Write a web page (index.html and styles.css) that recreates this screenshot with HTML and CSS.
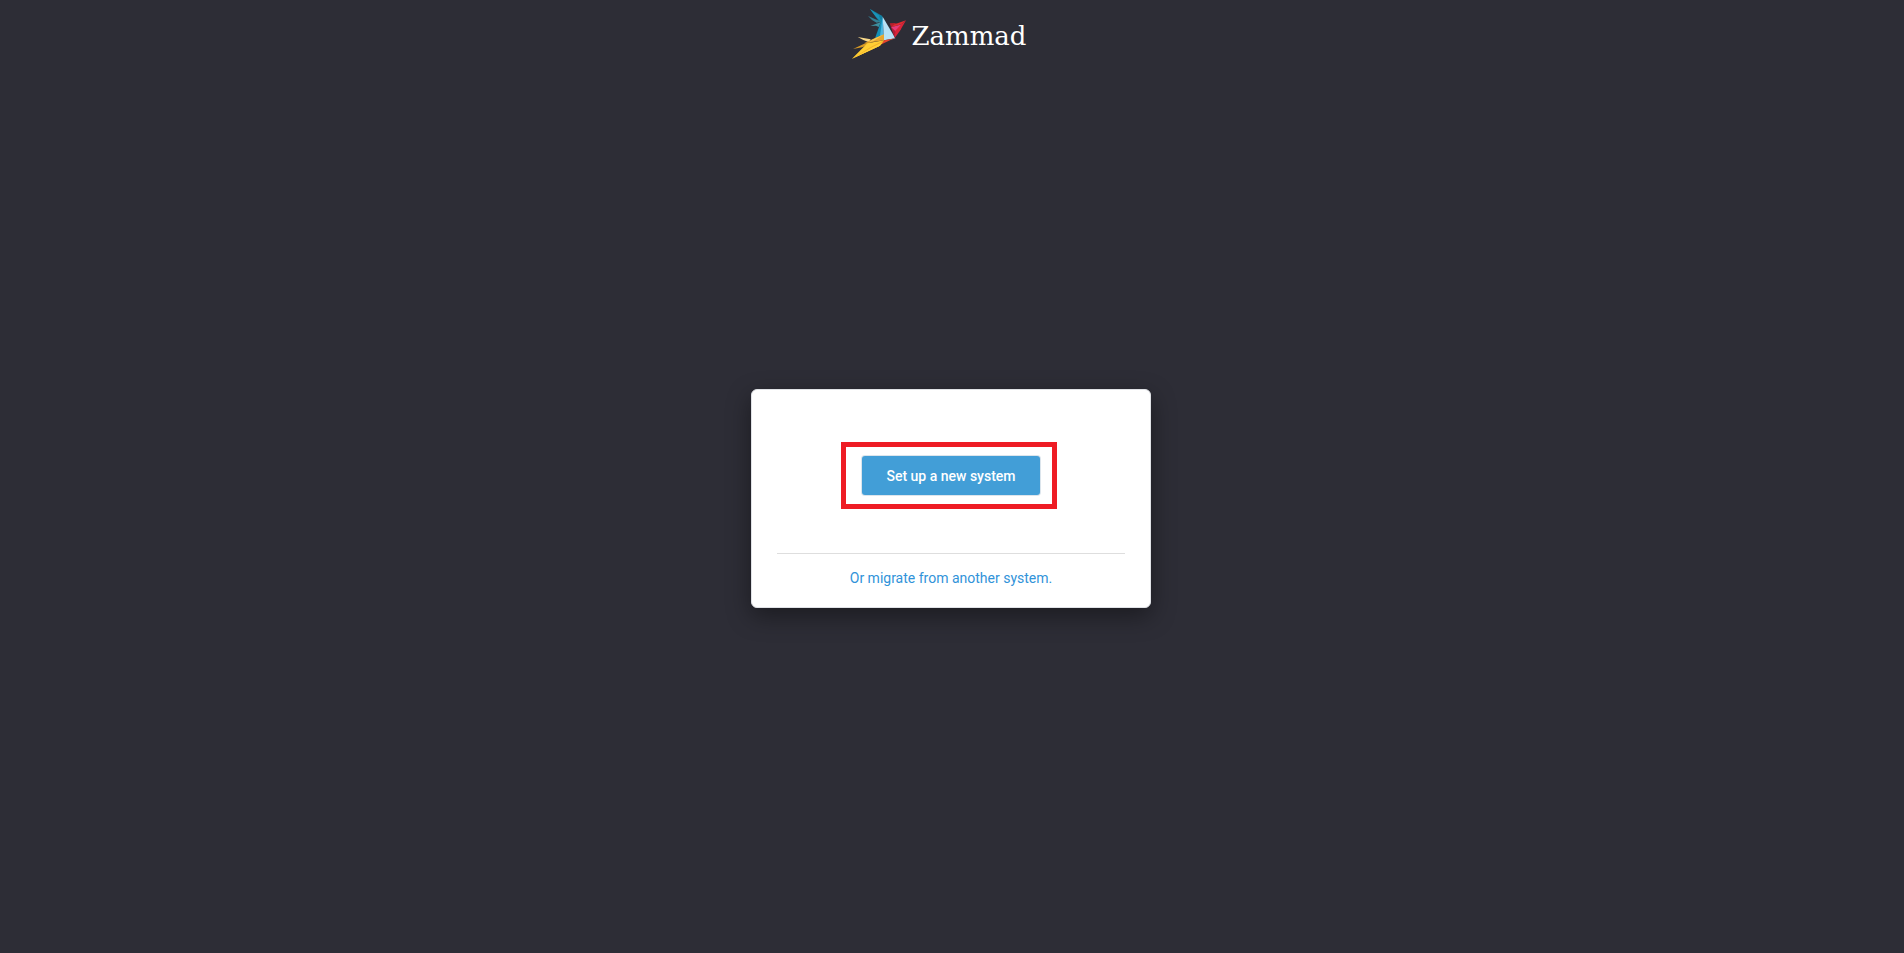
FILE: index.html
```html
<!DOCTYPE html>
<html lang="en">
<head>
  <meta charset="UTF-8">
  <meta name="viewport" content="width=device-width, initial-scale=1.0">
  <title>Zammad</title>
  <link rel="stylesheet" href="styles.css">
</head>
<body>
  <header class="header">
    <svg class="logo-bird" viewBox="36 24 162 156" aria-hidden="true">
      <!-- upper wing -->
      <path fill="#1280a3" d="M90 27 127 48 129 66 120 68Z"/>
      <path fill="#1b93b8" d="M90 27 116 46 123 64 108 50Z"/>
      <path fill="#337f93" d="M84 48 124 65 110 68 96 60Z"/>
      <path fill="#3d8fa0" d="M91 78 123 66 116 81 108 77Z"/>
      <!-- body -->
      <path fill="#148eb5" d="M128 50 104 118 124 106Z"/>
      <path fill="#4bb5df" d="M128 50 120 108 132 121Z"/>
      <path fill="#b8e3f6" d="M128 50 166 115 132 121Z"/>
      <!-- head -->
      <path fill="#b81f2d" d="M149 70 164 69 174 73 153 81Z"/>
      <path fill="#e42b30" d="M164 73 198 61 184 73 153 82Z"/>
      <path fill="#e93b79" d="M153 82 186 73 180 91 164 95Z"/>
      <path fill="#b51d35" d="M153 82 167 94 164 114Z"/>
      <path fill="#db2438" d="M198 61 180 92 164 114 166 92 184 73Z"/>
      <!-- tail -->
      <path fill="#e8452c" d="M132 121 166 115 150 121 120 135Z"/>
      <path fill="#f7d889" d="M53 111 92 118 87 127 70 120Z"/>
      <path fill="#e9a62f" d="M132 103 132 121 72 130 104 115Z"/>
      <path fill="#f7c84e" d="M132 103 104 121 84 129 96 119Z"/>
      <path fill="#d99a25" d="M39 147 84 126 100 130 66 142Z"/>
      <path fill="#ffce33" d="M36 176 82 130 132 121 120 137Z"/>
      <path fill="#f3b229" d="M36 176 92 141 132 121 120 137Z"/>
      <path fill="#ffd23c" d="M36 176 100 140 128 127 118 138Z"/>
    </svg>
    <span class="logo-text">Zammad</span>
  </header>

  <main class="main">
    <div class="card">
      <div class="setup">
        <button class="button" type="button">Set up a new system</button>
      </div>
      <div class="migrate">
        <a class="link" href="#migrate">Or migrate from another system.</a>
      </div>
    </div>
  </main>
</body>
</html>
```
FILE: styles.css
```css
*,
*::after {
  box-sizing: border-box;
}
body {
  display: flex;
  flex-direction: column;
  min-height: 100vh;
  margin: 0;
  background-color: #2d2d36;
  font-family: Roboto, sans-serif;
  font-size: 14px;
  line-height: 20px;
}
.header {
  display: flex;
  justify-content: center;
  align-items: center;
  gap: 5px;
  padding: 8px 25px 8px 0;
}
.logo-bird {
  width: 54px;
  height: 52px;
}
.logo-text {
  padding-top: 4px;
  color: #fff;
  font-family: 'DejaVu Serif', serif;
  font-size: 26px;
  line-height: 32px;
}
.main {
  display: flex;
  flex: 1;
  justify-content: center;
  align-items: center;
  padding: 0 2px 24px 0;
}
.card {
  width: 400px;
  max-width: 100%;
  padding: 0 25px;
  border: 1px solid #e0e2e6;
  border-radius: 6px;
  background-color: #fff;
  box-shadow: 0 8px 24px rgba(0, 0, 0, 0.4);
}
.setup {
  position: relative;
  display: flex;
  justify-content: center;
  padding: 66px 0 58px;
}
/* frame around the main action */
.setup::after {
  content: "";
  position: absolute;
  top: 52px;
  bottom: 44px;
  left: 64px;
  width: 216px;
  border: 5px solid #ee1c24;
  pointer-events: none;
}
.button {
  height: 39px;
  padding: 0 24px;
  border: none;
  border-radius: 3px;
  background-color: #429ed7;
  box-shadow: 0 0 0 1px #dce5ec;
  color: #fff;
  font-family: inherit;
  font-size: 14px;
  font-weight: 500;
  cursor: pointer;
}
.migrate {
  padding: 14px 0 19px;
  border-top: 1px solid #dedede;
  text-align: center;
}
.link {
  color: #3193d9;
  text-decoration: none;
}
.link:hover {
  text-decoration: underline;
}
```
